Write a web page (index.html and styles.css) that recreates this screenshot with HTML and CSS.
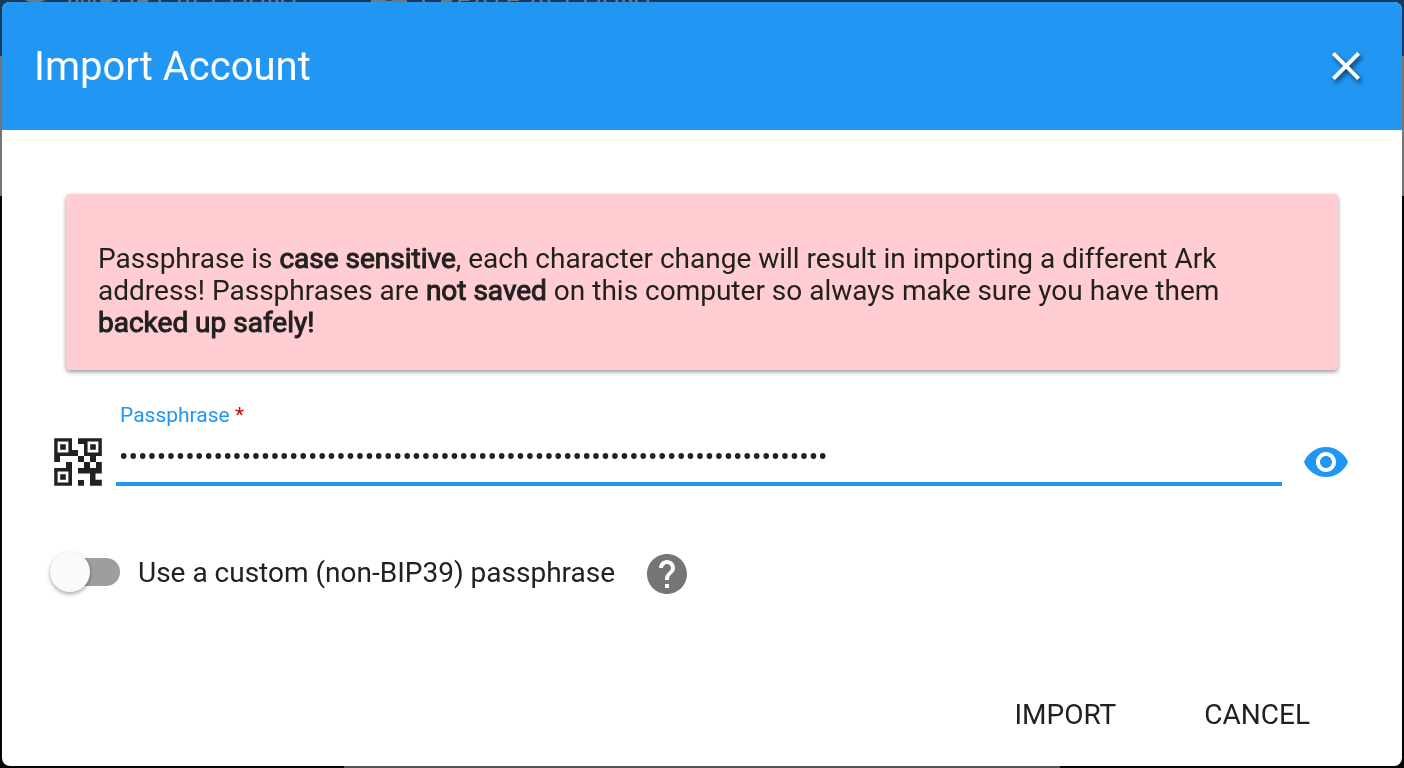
FILE: index.html
```html
<!DOCTYPE html>
<html lang="en">
<head>
<meta charset="utf-8">
<title>Import Account</title>
<link rel="stylesheet" href="styles.css">
</head>
<body>
<div class="backdrop" aria-hidden="true">
  <div class="backdrop-bar">
    <span class="backdrop-item"><svg width="24" height="4" viewBox="0 0 24 4"><path fill="#777" d="M0 0h22l-6 2H6z"/></svg>IMPORT ACCOUNT</span>
    <span class="backdrop-item"><svg width="36" height="4" viewBox="0 0 36 4"><path fill="#777" d="M0 0h14l4 1 4-1h14v2H0z"/></svg>CREATE ACCOUNT</span>
  </div>
  <div class="backdrop-panel"></div>
  <div class="backdrop-rest"><div class="backdrop-card"></div></div>
</div>
<form class="dialog" role="dialog" aria-labelledby="dialog-title">
  <header class="toolbar">
    <h1 class="title" id="dialog-title">Import Account</h1>
    <button class="icon-button close" type="button" aria-label="Close">
      <svg width="48" height="48" viewBox="0 0 24 24"><path fill="#fff" d="M19 6.41L17.59 5 12 10.59 6.41 5 5 6.41 10.59 12 5 17.59 6.41 19 12 13.41 17.59 19 19 17.59 13.41 12z"/></svg>
    </button>
  </header>
  <main class="content">
    <p class="warning">Passphrase is <b>case sensitive</b>, each character change will result in importing a different Ark address! Passphrases are <b>not saved</b> on this computer so always make sure you have them <b>backed up safely!</b></p>
    <div class="field-row">
      <button class="icon-button qr" type="button" aria-label="Scan QR code">
        <svg width="48" height="48" viewBox="0 0 48 48" fill="#212121">
          <path fill-rule="evenodd" d="M.2.2H18V18H.2zM3.600 3.600v10.800h10.800V3.600zM30 .2h17.800V18H30zM33.600 3.600v10.800h10.800V3.600zM.2 30H18v17.800H.2zM3.600 33.600v10.800h10.800V33.600z"/>
          <path d="M6.200 6.200h5.600v5.600H6.200zM36.200 6.200h5.600v5.600h-5.600zM6.200 36.200h5.600v5.600H6.200zM24 .2h6V6h-6zM18 12h6v6h-6zM.2 18H6v6H.2zM24 18h6v6h-6zM36 18h6v6h-6zM12 24h6v6h-6zM30 24h6v6h-6zM42 24h5.800v6H42zM24 30h23.800v5.500H24zM36 35h5.500v7H36zM24 42h6v5.800h-6zM36 41.800h11.800v6H36z"/>
        </svg>
      </button>
      <div class="field">
        <label class="field-label" for="passphrase">Passphrase <span class="required">*</span></label>
        <input class="field-input" id="passphrase" type="password" required value="abandon abandon abandon abandon abandon abandon abandon abandon abandon abo">
      </div>
      <button class="icon-button reveal" type="button" aria-label="Show passphrase">
        <svg width="48" height="48" viewBox="0 0 24 24"><path fill="#2196f3" d="M12 4.5C7 4.5 2.73 7.61 1 12c1.73 4.39 6 7.500 11 7.500s9.270-3.110 11-7.500c-1.730-4.390-6-7.500-11-7.500zM12 17c-2.760 0-5-2.240-5-5s2.240-5 5-5 5 2.240 5 5-2.240 5-5 5zm0-8c-1.660 0-3 1.340-3 3s1.340 3 3 3 3-1.340 3-3-1.340-3-3-3z"/></svg>
      </button>
    </div>
    <div class="option-row">
      <label class="option"><input class="switch" type="checkbox" role="switch"><span>Use a custom (non-BIP39) passphrase</span></label>
      <button class="icon-button help" type="button" aria-label="Help">
        <svg width="48" height="48" viewBox="0 0 24 24"><path fill="#757575" d="M12 2C6.480 2 2 6.480 2 12s4.480 10 10 10 10-4.480 10-10S17.520 2 12 2zm1 17h-2v-2h2v2zm2.070-7.750l-.9.920C13.450 12.900 13 13.500 13 15h-2v-.5c0-1.100.450-2.100 1.170-2.830l1.240-1.260c.370-.360.590-.860.590-1.410 0-1.100-.9-2-2-2s-2 .9-2 2H8c0-2.210 1.790-4 4-4s4 1.790 4 4c0 .880-.360 1.680-.930 2.250z"/></svg>
      </button>
    </div>
  </main>
  <footer class="actions">
    <button class="action" type="submit">IMPORT</button>
    <button class="action" type="button">CANCEL</button>
  </footer>
</form>
</body>
</html>
```
FILE: styles.css
```css
* { box-sizing: border-box; }

body {
  margin: 0;
  min-height: 100vh;
  display: flex;
  padding: 2px;
  background: #050506;
  color: #212121;
  font: 28px/32px Roboto, sans-serif;
}

button, input { font: inherit; color: inherit; }

.backdrop {
  position: fixed;
  inset: 0;
  z-index: -1;
  display: flex;
  flex-direction: column;
}
.backdrop-bar {
  display: flex;
  align-items: flex-start;
  gap: 68px;
  height: 56px;
  padding-left: 24px;
  background: #19395f;
  color: #777;
  line-height: 2px;
}
.backdrop-item { display: flex; gap: 18px; }
.backdrop-item + .backdrop-item { gap: 14px; }
.backdrop-panel { height: 140px; background: #757575; }
.backdrop-rest { flex: 1; display: flex; align-items: flex-end; justify-content: center; }
.backdrop-card { width: 51%; height: 2px; background: #555; }

.dialog {
  flex: 1;
  display: flex;
  flex-direction: column;
  border-radius: 8px;
  overflow: hidden;
  background: #fff;
}

.toolbar {
  display: flex;
  align-items: center;
  justify-content: space-between;
  height: 128px;
  padding: 0 32px;
  background: #2196f3;
  color: #fff;
}
.title { margin: 0; padding-top: 2px; font-size: 40px; line-height: 48px; font-weight: 400; }

.icon-button {
  display: flex;
  flex: none;
  padding: 0;
  border: 0;
  background: none;
  cursor: pointer;
}
.close svg { filter: drop-shadow(2px 3px 2px rgba(0, 0, 0, .6)); }

.content { flex: 1; padding: 64px 48px 0; }

.warning {
  margin: 0 16px;
  padding: 49px 32px 31px;
  border-radius: 4px;
  background: #ffcdd2;
  box-shadow: 0 2px 4px rgba(0, 0, 0, .4);
}
.warning b { font-weight: 400; -webkit-text-stroke: 1px currentColor; }

.field-row { display: flex; align-items: flex-end; margin-top: 28px; }
.qr { padding: 0 14px 0 4px; }
.reveal { padding: 0 4px 0 20px; }
.field { flex: 1; display: flex; flex-direction: column; }
.field-label { padding: 2px 0 0 4px; font-size: 21px; line-height: 30px; color: #2196f3; }
.required { color: #dd0000; }
.field-input {
  width: 100%;
  height: 56px;
  padding: 0 3px;
  border: 0;
  border-bottom: 4px solid #2196f3;
  outline: 0;
  background: none;
}

.option-row { display: flex; align-items: flex-start; gap: 28px; margin-top: 64px; }
.option { display: flex; align-items: center; gap: 18px; height: 46px; }
.switch {
  appearance: none;
  display: flex;
  align-items: center;
  width: 66px;
  height: 28px;
  margin: 0 0 2px 4px;
  border-radius: 14px;
  background: #9e9e9e;
}
.switch::before {
  content: "";
  flex: none;
  width: 40px;
  height: 40px;
  margin-left: -4px;
  border-radius: 50%;
  background: #fafafa;
  box-shadow: 0 2px 4px rgba(0, 0, 0, .35);
}

.actions { display: flex; justify-content: flex-end; gap: 56px; padding: 0 76px 35px; }
.action { padding: 0 16px; border: 0; background: none; cursor: pointer; }
```
